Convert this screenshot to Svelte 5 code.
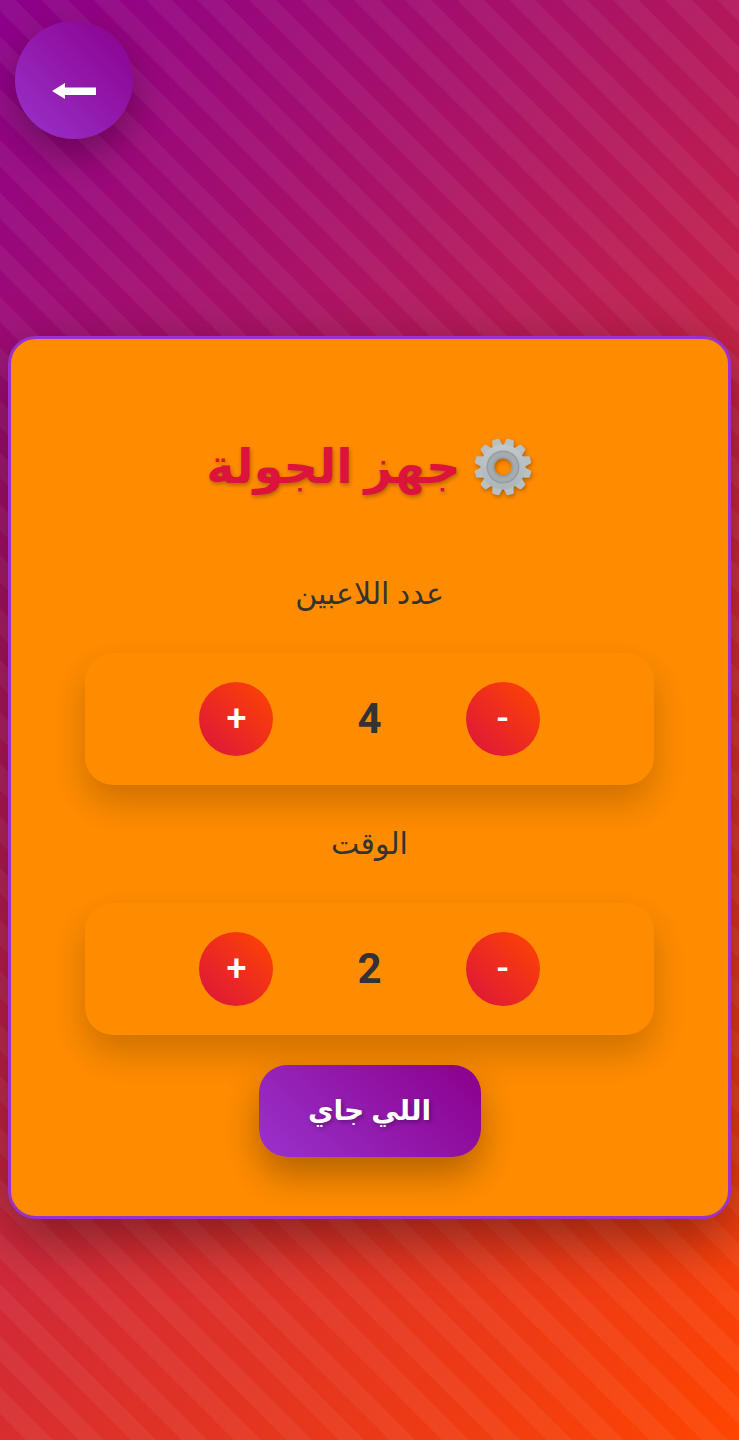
<script>
  let players = $state(4);
  let minutes = $state(2);

  const teeth = Array.from({ length: 12 }, (_, i) => i * 30 + 15);
</script>

<main class="page" dir="rtl" lang="ar">
  <header class="top">
    <button class="back" type="button" aria-label="رجوع">
      <svg width="46" height="18" viewBox="0 0 46 18" aria-hidden="true">
        <path d="M1 9 14 1v4.500H45v7.500H14V17z" fill="#fff" />
      </svg>
    </button>
  </header>

  <section class="card">
    <h1 class="title">
      <svg class="gear" viewBox="-30 -30 60 60" aria-hidden="true">
        <defs>
          <linearGradient id="steel" x1="0" y1="0" x2="0" y2="1">
            <stop offset="0" stop-color="#c2c8cb" />
            <stop offset="1" stop-color="#adb5b9" />
          </linearGradient>
          <mask id="hole" maskUnits="userSpaceOnUse" x="-30" y="-30" width="60" height="60">
            <rect x="-30" y="-30" width="60" height="60" fill="#fff" />
            <circle r="8.500" fill="#000" />
          </mask>
        </defs>
        <g mask="url(#hole)">
          {#each teeth as angle}
            <path d="M-5.500 -20 -3.800 -27.500 Q-3.500 -28.500 -2.500 -28.500 H2.500 Q3.500 -28.500 3.800 -27.500 L5.500 -20z" fill="#b9c0c4" transform="rotate({angle})" />
          {/each}
          <circle r="22.500" fill="url(#steel)" />
          <circle r="16.500" fill="#959da2" />
          <circle r="15" fill="#a5acb0" />
          <circle r="10.500" fill="#999fa3" />
        </g>
      </svg>
      <span>جهز الجولة</span>
    </h1>

    <h2 class="label" id="players-label">عدد اللاعبين</h2>
    <div class="stepper" role="group" aria-labelledby="players-label">
      <button class="step" type="button" onclick={() => (players = Math.max(1, players - 1))}>-</button>
      <output class="value">{players}</output>
      <button class="step" type="button" onclick={() => (players += 1)}>+</button>
    </div>

    <h2 class="label" id="time-label">الوقت</h2>
    <div class="stepper" role="group" aria-labelledby="time-label">
      <button class="step" type="button" onclick={() => (minutes = Math.max(1, minutes - 1))}>-</button>
      <output class="value">{minutes}</output>
      <button class="step" type="button" onclick={() => (minutes += 1)}>+</button>
    </div>

    <button class="next" type="button">اللي جاي</button>
  </section>
</main>

<style>
  :global(body) {
    margin: 0;
  }

  .page {
    --stripe: rgba(255, 255, 255, 0.05);
    box-sizing: border-box;
    min-height: 100vh;
    padding: 21px 8px;
    background:
      repeating-linear-gradient(
        45deg,
        transparent 0 18px,
        var(--stripe) 19px 37px,
        transparent 38px 55px,
        var(--stripe) 56px 73px,
        transparent 74px 92px,
        var(--stripe) 93px 110px,
        transparent 111px 128px,
        var(--stripe) 129px 147px
      ),
      linear-gradient(135deg, #8b008b, #ff4500);
    color: #333;
    font-family: Roboto, "DejaVu Sans", sans-serif;
  }

  button {
    border: 0;
    color: #fff;
    font-family: inherit;
    cursor: pointer;
  }

  .top {
    display: flex;
    justify-content: flex-end;
    padding: 0 7px;
  }

  .back {
    display: flex;
    align-items: center;
    justify-content: center;
    width: 118px;
    height: 118px;
    padding: 22px 0 0;
    border-radius: 50%;
    background: linear-gradient(45deg, #9932cc, #8b008b);
    box-shadow: 0 15px 37px rgba(0, 0, 0, 0.3);
  }

  .card {
    display: flex;
    flex-direction: column;
    align-items: center;
    gap: 30px;
    margin-top: 197px;
    padding: 73px 74px 59px;
    border: 3px solid #9932cc;
    border-radius: 28px;
    background: #ff8c00;
    box-shadow: 0 18px 56px rgba(0, 0, 0, 0.4);
  }

  .title {
    display: flex;
    align-items: center;
    gap: 12px;
    margin: 0 0 13px;
    color: #dc143c;
    font-size: 48px;
    font-weight: 700;
    line-height: 110px;
    text-shadow: 1px 2px 4px rgba(0, 0, 0, 0.3);
  }

  .gear {
    width: 60px;
    height: 60px;
    filter: drop-shadow(1px 2px 2px rgba(0, 0, 0, 0.3));
  }

  .label {
    margin: 0;
    font-size: 30px;
    font-weight: 400;
    line-height: 58px;
  }

  .stepper {
    display: flex;
    align-items: center;
    justify-content: center;
    gap: 84px;
    align-self: stretch;
    padding: 29px 0;
    border-radius: 28px;
    background: #ff8c00;
    box-shadow: 0 18px 37px rgba(0, 0, 0, 0.2);
  }

  .step {
    width: 74px;
    height: 74px;
    padding: 0;
    border-radius: 50%;
    background: linear-gradient(45deg, #dc143c, #ff4500);
    font-size: 36px;
    font-weight: 500;
    line-height: 74px;
  }

  .value {
    min-width: 24px;
    font-size: 42px;
    font-weight: 700;
    line-height: 74px;
    text-align: center;
  }

  .next {
    min-width: 222px;
    padding: 0 48px;
    border-radius: 28px;
    background: linear-gradient(45deg, #9932cc, #8b008b);
    box-shadow: 0 18px 37px rgba(0, 0, 0, 0.3);
    font-size: 28px;
    font-weight: 700;
    line-height: 92px;
    text-shadow: 2px 2px 4px rgba(0, 0, 0, 0.3);
  }
</style>
